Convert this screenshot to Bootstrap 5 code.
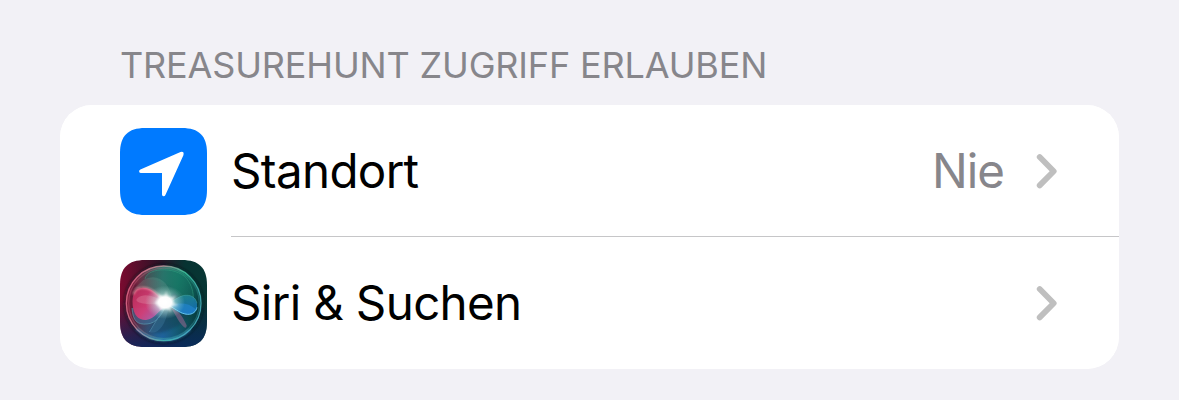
<!DOCTYPE html>
<html lang="de">
<head>
<meta charset="utf-8">
<meta name="viewport" content="width=device-width, initial-scale=1">
<title>Treasurehunt</title>
<link href="https://cdn.jsdelivr.net/npm/bootstrap@5.3.0/dist/css/bootstrap.min.css" rel="stylesheet">
<style>
body{background:#f2f1f6;color:#000;font-family:Inter,"Liberation Sans",sans-serif;overflow:hidden}
.page{padding:43px 60px 0}
.section-title{color:#87868b;font-size:36px;line-height:44px;letter-spacing:-.16px;margin:0 0 18px 60px;font-weight:400;white-space:nowrap}
.settings{border-radius:32px;overflow:hidden;background:#fff}
.settings .list-group-item{height:132px;padding:0 0 0 60px;border:0;background:#fff;color:#000}
.app-icon{width:87px;height:87px;flex:none}
.row-body{height:132px;margin-left:24px;padding-right:61px;font-size:47.5px;line-height:60px}
.row-line{box-shadow:inset 0 -1px #c6c6c8}
.name{letter-spacing:-.65px}
.value{color:#87868b;font-size:47.5px;letter-spacing:-1px;margin-right:32px}
.chevron{width:22px;height:36px}
</style>
</head>
<body>
<main class="page">
<h1 class="section-title">TREASUREHUNT ZUGRIFF ERLAUBEN</h1>
<div class="list-group settings">
  <a class="list-group-item d-flex align-items-center text-decoration-none">
    <svg class="app-icon" viewBox="0 0 87 87"><path fill="#007aff" d="M25 0H62C79 0 87 8 87 25V62C87 79 79 87 62 87H25C8 87 0 79 0 62V25C0 8 8 0 25 0Z"/><path fill="#fff" d="M20.4 41.4 60.5 23.9Q64.5 23 63.4 27.2L45.4 67Q44.8 68.3 43.5 68.2 42 68 42 66.4V45H21Q19.4 45 19.1 43.4 19.1 42 20.4 41.4Z"/></svg>
    <div class="row-body row-line d-flex align-items-center flex-grow-1">
      <span class="name me-auto">Standort</span><span class="value">Nie</span>
      <svg class="chevron" viewBox="0 0 22 36"><path d="M3.7 4 17.7 18.2 3.7 32.4" fill="none" stroke="#bfbfbf" stroke-width="5.8" stroke-linecap="round" stroke-linejoin="round"/></svg>
    </div>
  </a>
  <a class="list-group-item d-flex align-items-center text-decoration-none">
    <svg class="app-icon" viewBox="30 30 261 261">
      <defs>
        <clipPath id="tile"><path d="M105 30H216C267 30 291 54 291 105V216C291 267 267 291 216 291H105C54 291 30 267 30 216V105C30 54 54 30 105 30Z"/></clipPath>
        <clipPath id="sphere"><circle cx="161" cy="160" r="112"/></clipPath>
        <linearGradient id="bg"><stop offset="0" stop-color="#7b0b30"/><stop offset=".45" stop-color="#2c1226"/><stop offset=".75" stop-color="#073332"/><stop offset="1" stop-color="#073634"/></linearGradient>
        <linearGradient id="low" x2="0" y2="1"><stop offset=".45" stop-color="#0a2350" stop-opacity="0"/><stop offset="1" stop-color="#0a2a62" stop-opacity=".85"/></linearGradient>
        <linearGradient id="orb" x1=".05" y1=".45" x2=".95" y2=".55"><stop offset="0" stop-color="#83203f"/><stop offset=".2" stop-color="#5d3547"/><stop offset=".45" stop-color="#3c6469"/><stop offset=".68" stop-color="#16665c"/><stop offset="1" stop-color="#063e42"/></linearGradient>
        <radialGradient id="green" cx=".65" cy=".12" r=".5"><stop offset="0" stop-color="#16806a" stop-opacity=".65"/><stop offset="1" stop-color="#16806a" stop-opacity="0"/></radialGradient>
        <radialGradient id="blue" cx=".48" cy=".95" r=".5"><stop offset="0" stop-color="#1a62a8" stop-opacity=".85"/><stop offset="1" stop-color="#123f75" stop-opacity="0"/></radialGradient>
        <linearGradient id="ring" x1="0" y1=".35" x2="1" y2=".65"><stop offset="0" stop-color="#df6384"/><stop offset=".35" stop-color="#b29095"/><stop offset=".65" stop-color="#3cc09a"/><stop offset="1" stop-color="#45a9bc"/></linearGradient>
        <linearGradient id="pink" x2="1" y2=".8"><stop offset="0" stop-color="#b92b58"/><stop offset=".55" stop-color="#d93d78"/><stop offset="1" stop-color="#a16dc0"/></linearGradient>
        <linearGradient id="azure" x2=".6" y2="1"><stop offset="0" stop-color="#238a88"/><stop offset="1" stop-color="#1677c4"/></linearGradient>
        <radialGradient id="glow"><stop offset="0" stop-color="#fff"/><stop offset=".32" stop-color="#fff" stop-opacity=".97"/><stop offset=".52" stop-color="#d2f5f0" stop-opacity=".5"/><stop offset="1" stop-color="#a3dbd6" stop-opacity="0"/></radialGradient>
        <filter id="soft" x="-20%" y="-20%" width="140%" height="140%"><feGaussianBlur stdDeviation="3"/></filter>
      </defs>
      <g clip-path="url(#tile)">
        <path fill="url(#bg)" d="M30 30H291V291H30Z"/><path fill="url(#low)" d="M30 30H291V291H30Z"/>
        <circle cx="161" cy="161" r="118" fill="none" stroke="#08131c" stroke-opacity=".4" stroke-width="7" filter="url(#soft)"/>
        <g clip-path="url(#sphere)">
          <circle cx="161" cy="160" r="113" fill="url(#orb)"/><circle cx="161" cy="160" r="113" fill="url(#green)"/><circle cx="161" cy="160" r="113" fill="url(#blue)"/>
          <path d="M70 102C51 145 56 201 83 235 67 190 66 146 83 101Z" fill="#3f0c2b" opacity=".4" filter="url(#soft)"/>
          <path d="M105 87C112 46 210 45 236 94 261 134 250 168 244 190 230 132 175 89 105 87Z" fill="#20846e" opacity=".2"/>
          <path d="M105 87C112 50 210 48 236 94 249 115 251 137 249 151" fill="none" stroke="#43b58f" stroke-width="2" opacity=".55"/>
          <path d="M99 91C142 66 179 95 188 153L164 163C142 119 119 104 71 117Z" fill="#83b3a6" opacity=".2"/>
          <path d="M163 160 190 128C217 148 236 151 249 164 238 209 200 238 147 248L119 246Z" fill="#123b57" opacity=".45" filter="url(#soft)"/>
          <path d="M164 166 118 246C141 255 167 231 176 171Z" fill="#5daad1" opacity=".2"/>
          <path d="M164 170 118 246" stroke="#75bfdb" stroke-width="2" opacity=".45"/>
          <path d="M178 164C201 174 218 199 230 226 230 239 221 234 206 212Z" fill="#b96f9d" opacity=".45"/>
          <path d="M66 174C68 213 83 225 111 222 140 220 155 193 166 171" fill="#3f719f" fill-opacity=".55" stroke="#68b4c5" stroke-width="2.5" stroke-opacity=".6"/>
          <path d="M169 157C143 136 126 112 97 113 76 114 65 132 68 165 71 196 86 211 108 210 135 208 146 180 170 166Z" fill="url(#pink)" opacity=".92"/>
          <path d="M169 157C145 137 126 112 97 113 84 113 74 121 70 133" fill="none" stroke="#ffadb8" stroke-width="4" filter="url(#soft)"/>
          <path d="M168 158C132 136 101 128 83 144 67 157 105 167 166 161Z" fill="#e291a8" opacity=".35"/>
          <path d="M180 158C205 142 216 134 235 136 255 138 264 156 261 174 257 193 240 197 219 191 201 187 190 176 179 167Z" fill="url(#azure)" opacity=".8"/>
          <path d="M182 165C213 157 235 158 258 178 249 196 229 195 213 189Z" fill="#288ee4" opacity=".45"/>
          <path d="M176 166C201 179 211 191 232 193 248 194 259 184 261 172" fill="none" stroke="#78d5f4" stroke-width="3" opacity=".8"/>
          <path d="M180 158C205 142 216 134 235 136 250 138 258 147 261 160" fill="none" stroke="#51b7b0" stroke-width="2" opacity=".6"/>
          <ellipse cx="165" cy="157" rx="60" ry="50" fill="url(#glow)"/>
          <path d="M169 122 174 146 198 138 184 155 205 165 181 169 183 186 168 174 151 183 151 168 132 159 149 149 145 131 162 143Z" fill="#fff" opacity=".6" filter="url(#soft)"/>
        </g>
        <circle cx="161" cy="160" r="112" fill="none" stroke="url(#ring)" stroke-width="4" opacity=".9"/>
        <circle cx="162" cy="160" r="106" fill="none" stroke="url(#ring)" stroke-width="4" opacity=".3"/>
        <path d="M79 236C125 281 195 283 240 239" fill="none" stroke="#50a8df" stroke-width="4" opacity=".85" filter="url(#soft)"/>
      </g>
    </svg>
    <div class="row-body d-flex align-items-center flex-grow-1">
      <span class="name me-auto">Siri &amp; Suchen</span>
      <svg class="chevron" viewBox="0 0 22 36"><path d="M3.7 4 17.7 18.2 3.7 32.4" fill="none" stroke="#bfbfbf" stroke-width="5.8" stroke-linecap="round" stroke-linejoin="round"/></svg>
    </div>
  </a>
</div>
</main>
<script src="https://cdn.jsdelivr.net/npm/bootstrap@5.3.0/dist/js/bootstrap.bundle.min.js"></script>
</body>
</html>
